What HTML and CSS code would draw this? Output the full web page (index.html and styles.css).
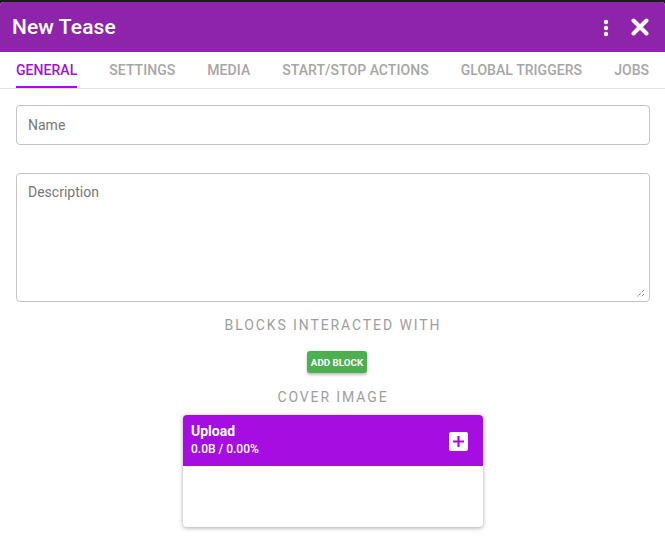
FILE: index.html
```html
<!DOCTYPE html>
<html>
<head>
<meta charset="utf-8">
<link rel="stylesheet" href="styles.css">
</head>
<body>
<div class="dialog">
  <header class="topbar">
    <h1 class="title">New Tease</h1>
    <div class="actions">
      <svg class="more" width="6" height="18" viewBox="0 0 6 18"><circle cx="3" cy="3" r="2.2" fill="#fff"/><circle cx="3" cy="9" r="2.2" fill="#fff"/><circle cx="3" cy="15" r="2.2" fill="#fff"/></svg>
      <svg class="close" width="18" height="18" viewBox="0 0 18 18"><path d="M2.5 2.5 L15.5 15.5 M15.5 2.5 L2.5 15.5" stroke="#fff" stroke-width="4" stroke-linecap="round"/></svg>
    </div>
  </header>
  <nav class="tabs">
    <span class="tab active">General</span>
    <span class="tab">Settings</span>
    <span class="tab">Media</span>
    <span class="tab">Start/Stop Actions</span>
    <span class="tab">Global Triggers</span>
    <span class="tab">Jobs</span>
  </nav>
  <main class="content">
    <div class="field"><span class="placeholder">Name</span></div>
    <div class="field area"><span class="placeholder">Description</span>
      <svg class="grip" width="9" height="9" viewBox="0 0 9 9"><path d="M8 1 L1 8 M8 5 L5 8" stroke="#555" stroke-width="1" stroke-dasharray="1 1"/></svg>
    </div>
    <div class="section-label">Blocks Interacted With</div>
    <button class="add-btn">Add Block</button>
    <div class="section-label cover">Cover Image</div>
    <div class="card">
      <div class="card-head">
        <div class="card-text">
          <div class="card-title">Upload</div>
          <div class="card-sub">0.0B / 0.00%</div>
        </div>
        <svg class="plus" width="19" height="19" viewBox="0 0 19 19"><rect x="0" y="0" width="19" height="19" rx="2" fill="#fff"/><path d="M9.5 4 V15 M4 9.5 H15" stroke="#a50de0" stroke-width="2.2"/></svg>
      </div>
      <div class="card-body"></div>
    </div>
  </main>
</div>
</body>
</html>
```
FILE: styles.css
```css
html, body {
  margin: 0;
  padding: 0;
  background: #1c1a1d;
  font-family: Roboto, "Liberation Sans", sans-serif;
}
.dialog {
  margin-top: 2px;
  background: #fff;
  border-radius: 4px 4px 0 0;
  height: 539px;
  overflow: hidden;
}
.topbar {
  height: 50px;
  background: #8e24aa;
  display: flex;
  align-items: center;
  justify-content: space-between;
  padding: 0 16px 0 12px;
}
.title {
  margin: 0;
  color: #fff;
  font-size: 21px;
  font-weight: 500;
  letter-spacing: 0.1px;
}
.actions {
  display: flex;
  align-items: center;
  gap: 22px;
}
.more { margin-top: 1px; }
.tabs {
  display: flex;
  height: 36px;
  border-bottom: 1px solid #e0e0e0;
}
.tab {
  padding: 0 16px;
  font-size: 14px;
  font-weight: 500;
  text-transform: uppercase;
  color: #a6a6a6;
  display: flex;
  align-items: center;
  white-space: nowrap;
  position: relative;
  letter-spacing: 0.05px;
}
.tab.active { color: #a50de0; }
.tab.active::after {
  content: "";
  position: absolute;
  left: 16px;
  right: 16px;
  bottom: 0;
  height: 2px;
  background: #a50de0;
}
.content {
  padding: 16px 15px 0 16px;
  display: flex;
  flex-direction: column;
  align-items: center;
}
.field {
  align-self: stretch;
  height: 38px;
  border: 1px solid #c4c4c4;
  border-radius: 4px;
  display: flex;
  align-items: center;
  padding: 0 11px;
}
.field.area {
  margin-top: 28px;
  align-items: flex-start;
  padding-top: 10px;
  box-sizing: border-box;
  height: 129px;
  position: relative;
}
.grip {
  position: absolute;
  right: 4px;
  bottom: 3px;
}
.placeholder {
  font-size: 14px;
  color: #777;
}
.section-label {
  margin-top: 14px;
  font-size: 14px;
  line-height: 18px;
  color: #9e9e9e;
  letter-spacing: 1.9px;
  text-transform: uppercase;
}
.add-btn {
  margin-top: 17px;
  margin-left: 8px;
  height: 22px;
  padding: 0 4px;
  border: none;
  border-radius: 3px;
  background: #4caf50;
  color: #fff;
  font-family: Roboto, "Liberation Sans", sans-serif;
  font-size: 9.8px;
  font-weight: 700;
  text-transform: uppercase;
  box-shadow: 0 2px 3px rgba(0,0,0,0.25);
}
.section-label.cover {
  margin-top: 15px;
}
.card {
  margin-top: 9px;
  width: 300px;
  border-radius: 4px;
  overflow: hidden;
  box-shadow: 0 1px 4px rgba(0,0,0,0.35);
  background: #fff;
}
.card-head {
  height: 51px;
  background: #a50de0;
  display: flex;
  justify-content: space-between;
  align-items: flex-start;
  padding: 0 15px 0 8px;
}
.card-text { padding-top: 8px; }
.card-title {
  color: #fff;
  font-size: 14px;
  font-weight: 700;
}
.card-sub {
  color: #fff;
  font-size: 12px;
  font-weight: 500;
  margin-top: 3px;
}
.plus { margin-top: 17px; }
.card-body { height: 61px; }
```
